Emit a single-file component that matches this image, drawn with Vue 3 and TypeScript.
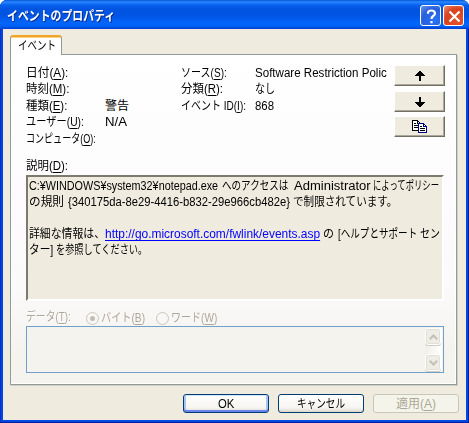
<script setup lang="ts">
import type { Directive } from 'vue'

interface Field { label: string; key: string; lw: number; value?: string; vw?: number }

const left: Field[] = [
  { label: '日付', key: 'A', lw: 42 },
  { label: '時刻', key: 'M', lw: 43 },
  { label: '種類', key: 'E', lw: 41, value: '警告', vw: 24 },
  { label: 'ユーザー', key: 'U', lw: 58, value: 'N/A', vw: 22 },
  { label: 'コンピュータ', key: 'O', lw: 70 },
]
const right: Field[] = [
  { label: 'ソース', key: 'S', lw: 46, value: 'Software Restriction Polic', vw: 132 },
  { label: '分類', key: 'R', lw: 42, value: 'なし', vw: 20 },
  { label: 'イベント ID', key: 'I', lw: 65, value: '868', vw: 19 },
]

interface Run { text: string; w: number; gap?: number; link?: boolean }
const lines: Run[][] = [
  [
    { text: 'C:¥WINDOWS¥system32¥notepad.exe', w: 189, gap: 4 },
    { text: 'へのアクセスは', w: 66, gap: 5 },
    { text: 'Administrator', w: 77, gap: 3 },
    { text: 'によってポリシー', w: 66 },
  ],
  [
    { text: 'の規則', w: 35, gap: 4 },
    { text: '{340175da-8e29-4416-b832-29e966cb482e}', w: 222, gap: 3 },
    { text: 'で制限されています。', w: 104 },
  ],
  [],
  [
    { text: '詳細な情報は、', w: 76 },
    { text: 'http://go.microsoft.com/fwlink/events.asp', w: 215, gap: 3, link: true },
    { text: 'の', w: 11, gap: 4 },
    { text: '[ヘルプとサポート', w: 79, gap: 3 },
    { text: 'セン', w: 20 },
  ],
  [
    { text: 'ター]', w: 24, gap: 3 },
    { text: 'を参照してください。', w: 91 },
  ],
]

// Condenses a run of text to the advance width of the dialog's narrow UI font.
const vFit: Directive<HTMLElement, number | undefined> = {
  mounted(el, { value }) {
    const natural = el.offsetWidth
    if (!value || !natural) return
    el.style.transform = `scaleX(${value / natural})`
    el.style.marginRight = `${value - natural}px`
  },
}
</script>

<template>
  <div class="window">
    <header class="titlebar">
      <h1><span v-fit="108" class="t">イベントのプロパティ</span></h1>
      <button class="cap help" aria-label="help"><svg width="21" height="21" viewBox="0 0 21 21"><path d="M7 7.8V6.5Q7.5 4.5 10.5 4.5T14 7.3Q14 8.8 12.2 10T10.5 13M10.5 15v2.2" /></svg></button>
      <button class="cap close" aria-label="close"><svg width="21" height="21" viewBox="0 0 21 21"><path d="M5.5 5.5l10 10M15.500 5.500l-10 10" /></svg></button>
    </header>
    <main class="body">
      <div class="tab"><span v-fit="38" class="t">イベント</span></div>
      <section class="panel">
        <div class="top">
          <dl class="fields first">
            <div v-for="f in left" :key="f.key" class="field">
              <dt><span v-fit="f.lw" class="t">{{ f.label }}(<u>{{ f.key }}</u>):</span></dt>
              <dd><span v-if="f.value" v-fit="f.vw" class="t">{{ f.value }}</span></dd>
            </div>
          </dl>
          <dl class="fields second">
            <div v-for="f in right" :key="f.key" class="field">
              <dt><span v-fit="f.lw" class="t">{{ f.label }}(<u>{{ f.key }}</u>):</span></dt>
              <dd><span v-fit="f.vw" class="t">{{ f.value }}</span></dd>
            </div>
          </dl>
          <div class="side">
            <button class="classic"><svg width="10" height="10" viewBox="0 0 10 10" shape-rendering="crispEdges"><path d="M4 0h2v1h1v1h1v1h1v1h1v1H6v5H4V5H0V4h1V3h1V2h1V1h1z" /></svg></button>
            <button class="classic"><svg width="10" height="10" viewBox="0 0 10 10" shape-rendering="crispEdges"><path d="M4 10h2V9h1V8h1V7h1V6h1V5H6V0H4v5H0v1h1v1h1v1h1v1h1z" /></svg></button>
            <button class="classic">
              <svg width="16" height="14" viewBox="0 0 16 14" shape-rendering="crispEdges">
                <path d="M.5 .5h5l3 3v7h-8z" fill="#fff" stroke="#000" />
                <path d="M5.500 .5v3h3M2 3.500h2M2 5.500h4M2 7.500h4" fill="none" stroke="#000" />
                <path d="M6.500 3.500h5l3 3v6h-8z" fill="#fff" stroke="#000080" />
                <path d="M11.500 3.500v3h3" fill="none" stroke="#000080" />
                <path d="M8 6.500h2M8 8.500h5M8 10.500h5" fill="none" stroke="#000" />
              </svg>
            </button>
          </div>
        </div>
        <div class="desc-label"><span v-fit="42" class="t">説明(<u>D</u>):</span></div>
        <div class="desc">
          <p v-for="(line, i) in lines" :key="i">
            <span v-for="(r, j) in line" :key="j" class="run" :style="{ marginRight: (r.gap ?? 0) + 'px' }"><span v-fit="r.w" class="t" :class="{ link: r.link }">{{ r.text }}</span></span>
          </p>
        </div>
        <div class="data-row">
          <div class="data-label"><span v-fit="45" class="t">データ(<u>T</u>):</span></div>
          <label class="byte"><i class="radio on"></i><span v-fit="44" class="t">バイト(<u>B</u>)</span></label>
          <label><i class="radio"></i><span v-fit="46" class="t">ワード(<u>W</u>)</span></label>
        </div>
        <div class="data">
          <div class="scroll">
            <span class="arrow"><svg width="9" height="6" viewBox="0 0 9 6"><path d="M.8 5.200l3.700-3.700 3.700 3.700" /></svg></span>
            <span class="arrow"><svg width="9" height="6" viewBox="0 0 9 6"><path d="M.8 .8l3.700 3.700 3.700-3.700" /></svg></span>
          </div>
        </div>
      </section>
      <footer class="actions">
        <button class="xp default"><span v-fit="16" class="t">OK</span></button>
        <button class="xp"><span v-fit="48" class="t">キャンセル</span></button>
        <button class="xp disabled"><span v-fit="40" class="t">適用(<u>A</u>)</span></button>
      </footer>
    </main>
  </div>
</template>

<style>
body { background: #fff; overflow: hidden; }
</style>
<style scoped>
* { box-sizing: border-box; margin: 0; padding: 0; }
.window {
  width: 469px; height: 423px; display: flex; flex-direction: column;
  font: 12px/16px "Liberation Sans", "Noto Sans CJK JP", sans-serif; color: #000;
  border-radius: 7px 7px 0 0; overflow: hidden; background: #0046e0;
  box-shadow: inset -1px -1px #001ea0, inset 1px 0 #0030c8;
}
button { font: inherit; color: inherit; }
.t { display: inline-block; white-space: nowrap; transform-origin: 0 50%; }
u { text-decoration: underline; text-underline-offset: 2px; text-decoration-thickness: 1px; }
.titlebar {
  height: 29px; flex: none; display: flex; align-items: center; gap: 2px; padding: 2px 5px 0 7px;
  background: linear-gradient(#0058d6 0, #2b86ff 2px, #0762ee 5px, #0054e0 9px, #0055e5 16px, #0365fb 23px, #0061f7 26px, #003dd0 29px);
}
h1 { flex: 1; font-size: 13px; font-weight: 700; line-height: 18px; color: #fff; text-shadow: 1px 1px #0a2a80; }
.cap { width: 21px; height: 21px; border: 1px solid #fff; border-radius: 3px; display: grid; place-items: center; overflow: hidden; }
.cap svg { fill: none; stroke: #fff; stroke-width: 2.2; flex: none; }
.help { background: radial-gradient(circle at 70% 75%, #2a72f5, #2860dc 60%, #6d94ef); }
.close { background: radial-gradient(circle at 70% 75%, #e2512c, #d9431f 60%, #ee9479); }
.body { flex: 1; margin: 0 3px 3px; padding: 6px 0 0 7px; background: #efebde; }
.tab {
  width: 52px; height: 20px; position: relative; z-index: 1; margin-bottom: -1px; padding: 1px 0 0 7px;
  background: #fff; border: 1px solid #919b9c; border-width: 0 1px; border-top: 2px solid #f0a62c;
  border-radius: 3px 3px 0 0; box-shadow: inset 0 1px #ffd27c; line-height: 16px;
}
.panel {
  width: 447px; height: 331px; border: 1px solid #919b9c; padding: 9px 11px 0 15px;
  background: linear-gradient(#fff, #fdfbfd 45%, #fbfafb 70%, #f5f3ee 90%);
  box-shadow: inset -1px -1px #fff, 1px 1px #d0cec0;
}
.top { display: flex; height: 94px; }
.fields { padding-top: 1px; }
.first { width: 155px; }
.second { width: 213px; }
.field { display: flex; height: 16.400px; line-height: 16px; }
.first dt { width: 79px; }
.second dt { width: 74px; }
.side { display: flex; flex-direction: column; gap: 4px; padding-top: 1px; }
.classic {
  width: 51px; height: 21px; background: #efebde; display: grid; place-items: center;
  border: 1px solid; border-color: #fff #716f64 #716f64 #fff; box-shadow: inset -1px -1px #aca899;
}
.classic:nth-child(2) { margin-top: 1px; }
.classic svg { display: block; }
.desc-label { height: 17px; line-height: 16px; }
.desc {
  width: 418px; height: 126px; background: #efebde; padding: 1px;
  border: 2px solid; border-color: #7c7a6c #fff #fff #7c7a6c;
}
.desc p { height: 16px; display: flex; white-space: nowrap; }
.run { display: inline-flex; flex: none; }
.link { color: #00f; text-decoration: underline; text-underline-offset: 2px; }
.data-row { display: flex; align-items: center; height: 25px; padding-top: 9px; color: #aca899; }
.data-label { width: 60px; margin-top: -2px; text-shadow: 1px 1px #fff; }
label { display: flex; align-items: center; gap: 2px; }
.byte { width: 70px; }
.radio { width: 13px; height: 13px; border: 1px solid #cac8bb; border-radius: 50%; display: grid; place-items: center; flex: none; }
.on::after { content: ''; width: 5px; height: 5px; border-radius: 50%; background: #c2bcb2; }
.data { width: 418px; height: 47px; border: 1px solid #6f9fca; background: #f5f3ee; display: flex; justify-content: flex-end; padding: 1px; }
.scroll { width: 17px; display: flex; flex-direction: column; justify-content: space-between; background: linear-gradient(90deg, #f1efe8, #fff); }
.arrow { height: 17px; width: 16px; border: 1px solid #fff; border-radius: 3px; background: #eeede5; display: grid; place-items: center; box-shadow: inset 0 0 0 1px #e2e0d6, 0 1px #cfccbd; }
.arrow svg { fill: none; stroke: #c5c2b8; stroke-width: 2.200; display: block; }
.actions { display: flex; justify-content: flex-end; gap: 9px; padding: 9px 7px 0 0; }
.xp {
  width: 86px; height: 19px; border: 1px solid #003c74; border-radius: 3px; line-height: 16px;
  background: linear-gradient(#fff, #f6f5f1 75%, #dcd8cc); display: flex; justify-content: center; align-items: center;
}
.default { box-shadow: inset 0 1px #cee7ff, inset 0 -2px #6982ee, inset 2px 0 #a9c3f3, inset -2px 0 #a9c3f3; }
.disabled { color: #aca899; border-color: #c9c7ba; background: #f5f4ea; }
</style>
